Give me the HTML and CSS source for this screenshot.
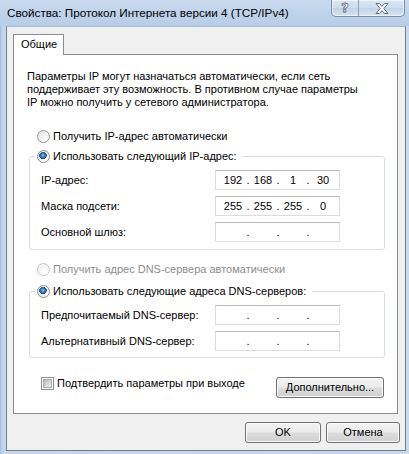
FILE: index.html
```html
<!DOCTYPE html>
<html lang="ru">
<head>
<meta charset="utf-8">
<title>Свойства: Протокол Интернета версии 4 (TCP/IPv4)</title>
<link rel="stylesheet" href="styles.css">
</head>
<body>
<div class="window">
  <div class="titlebar">
    <span class="title">Свойства: Протокол Интернета версии 4 (TCP/IPv4)</span>
    <div class="caption-btns">
      <span class="cbtn help">?</span>
      <span class="cbtn close"><svg width="14" height="11" viewBox="0 0 14 11"><path d="M1 0.5 H4.5 L7 3.4 L9.5 0.5 H13 L8.9 5.5 L13 10.5 H9.5 L7 7.6 L4.5 10.5 H1 L5.1 5.5 Z" fill="#ffffff" stroke="#5d6d80" stroke-width="1" stroke-linejoin="round"/></svg></span>
    </div>
  </div>
  <div class="client">
    <div class="tabs"><span class="tab">Общие</span></div>
    <div class="panel">
      <p class="intro">Параметры IP могут назначаться автоматически, если сеть<br>поддерживает эту возможность. В противном случае параметры<br>IP можно получить у сетевого администратора.</p>

      <div class="opt opt-ip-auto"><span class="radio"></span><span class="opt-text">Получить IP-адрес автоматически</span></div>

      <fieldset class="group group-ip">
        <legend class="opt"><span class="radio checked"></span><span class="opt-text">Использовать следующий IP-адрес:</span></legend>
        <div class="field"><span class="label">IP-адрес:</span>
          <div class="ipbox"><span class="oct">192</span><span class="dot">.</span><span class="oct">168</span><span class="dot">.</span><span class="oct">1</span><span class="dot">.</span><span class="oct">30</span></div>
        </div>
        <div class="field"><span class="label">Маска подсети:</span>
          <div class="ipbox"><span class="oct">255</span><span class="dot">.</span><span class="oct">255</span><span class="dot">.</span><span class="oct">255</span><span class="dot">.</span><span class="oct">0</span></div>
        </div>
        <div class="field"><span class="label">Основной шлюз:</span>
          <div class="ipbox"><span class="oct"></span><span class="dot">.</span><span class="oct"></span><span class="dot">.</span><span class="oct"></span><span class="dot">.</span><span class="oct"></span></div>
        </div>
      </fieldset>

      <div class="opt opt-dns-auto disabled"><span class="radio"></span><span class="opt-text">Получить адрес DNS-сервера автоматически</span></div>

      <fieldset class="group group-dns">
        <legend class="opt"><span class="radio checked"></span><span class="opt-text">Использовать следующие адреса DNS-серверов:</span></legend>
        <div class="field"><span class="label">Предпочитаемый DNS-сервер:</span>
          <div class="ipbox"><span class="oct"></span><span class="dot">.</span><span class="oct"></span><span class="dot">.</span><span class="oct"></span><span class="dot">.</span><span class="oct"></span></div>
        </div>
        <div class="field"><span class="label">Альтернативный DNS-сервер:</span>
          <div class="ipbox"><span class="oct"></span><span class="dot">.</span><span class="oct"></span><span class="dot">.</span><span class="oct"></span><span class="dot">.</span><span class="oct"></span></div>
        </div>
      </fieldset>

      <div class="bottom-row">
        <div class="check-opt"><span class="checkbox"></span><span class="opt-text">Подтвердить параметры при выходе</span></div>
        <button class="btn btn-adv">Дополнительно...</button>
      </div>
    </div>
    <div class="dlg-buttons">
      <button class="btn btn-ok">OK</button>
      <button class="btn btn-cancel">Отмена</button>
    </div>
  </div>
</div>
</body>
</html>
```

FILE: styles.css
```css
* { box-sizing: border-box; }

html, body {
  margin: 0;
  padding: 0;
  background: #c3d6ec;
}

body {
  font-family: "Liberation Sans", Arial, sans-serif;
  font-size: 11px;
  color: #000;
}

.window {
  width: 409px;
  height: 454px;
  background: linear-gradient(90deg, #9fbadb 0px, #bfd3eb 2px, #c6d8ee 6px, #c2d5eb 60%, #c9daee 100%);
  overflow: hidden;
}

.titlebar {
  height: 26px;
  display: flex;
  align-items: flex-start;
  background: linear-gradient(180deg, #c9daee 0%, #bed2ea 55%, #b7cde7 100%);
}

.title {
  font-size: 11.7px;
  line-height: 26px;
  padding-left: 7px;
  color: #000;
  flex: 1;
  white-space: nowrap;
}

.caption-btns {
  display: flex;
  margin-right: 4px;
  height: 17px;
  border: 1px solid #7d8da2;
  border-top: none;
  border-radius: 0 0 5px 5px;
  background: linear-gradient(180deg, rgba(255,255,255,0.35), rgba(255,255,255,0.15) 50%, rgba(190,205,225,0.3) 51%, rgba(255,255,255,0.4));
  box-shadow: inset 0 0 0 1px rgba(255,255,255,0.55);
  overflow: hidden;
}

.cbtn {
  display: flex;
  align-items: center;
  justify-content: center;
  height: 16px;
}

.help {
  width: 27px;
  border-right: 1px solid #8b9bb0;
  font-family: "DejaVu Sans", sans-serif;
  font-weight: bold;
  font-size: 13px;
  color: #fff;
  -webkit-text-stroke: 0.8px #5d6d80;
  line-height: 16px;
}

.close {
  width: 45px;
}

.client {
  margin-left: 6px;
  width: 400px;
  height: 425px;
  background: #f0f0f0;
  border: 1px solid #6e7f94;
  border-top-color: #a9bbd1;
  padding: 7px 0 0 6px;
}

.tabs {
  display: flex;
  height: 20px;
  position: relative;
  z-index: 1;
}

.tab {
  width: 51px;
  height: 21px;
  border: 1px solid #898c95;
  border-bottom: none;
  background: #fff;
  padding-left: 7px;
  line-height: 18px;
}

.panel {
  width: 385px;
  height: 360px;
  background: #fff;
  border: 1px solid #898c95;
  padding: 14px 12px 0 13px;
}

.intro {
  margin: 0;
  line-height: 13px;
  padding-top: 1px;
}

.opt {
  display: flex;
  align-items: center;
  height: 16px;
  line-height: 16px;
  white-space: nowrap;
}

.opt-text { margin-left: 3px; }

.opt-ip-auto {
  margin-top: 19px;
  margin-left: 10px;
}

.opt-dns-auto {
  margin-top: 11px;
  margin-left: 10px;
}

.disabled { color: #8d8d8d; }

.radio {
  width: 13px;
  height: 13px;
  border-radius: 50%;
  border: 1px solid #8e8f8f;
  background: radial-gradient(circle at 65% 70%, #ffffff 0%, #f3f3f3 35%, #d4d4d4 100%);
  box-shadow: inset 0 0 0 1px rgba(255,255,255,0.6);
  position: relative;
  flex: none;
}

.radio.checked {
  background:
    radial-gradient(circle at 45% 40%, #8fd0f5 0px, #3d8fd6 1.5px, #1c5a9c 3px, #0f3f76 3.6px, transparent 3.8px),
    radial-gradient(circle at 65% 70%, #ffffff 0%, #f3f3f3 35%, #d4d4d4 100%);
}

.disabled .radio {
  border-color: #c4c4c4;
  background: radial-gradient(circle at 65% 70%, #ffffff 0%, #f6f6f6 45%, #e6e6e6 100%);
}

.group {
  margin: 4px 0 0 2px;
  width: 356px;
  min-width: 0;
  border: 1px solid #d5dfe5;
  border-radius: 3px;
  padding: 6px 0 7px 5px;
}

.group-dns {
  margin-top: 6px;
  padding-bottom: 6px;
}

.group legend {
  padding: 0 6px 0 2px;
}

.field {
  display: grid;
  grid-template-columns: 174px 125px;
  align-items: center;
  height: 20px;
  margin-left: 6px;
}

.field + .field { margin-top: 6px; }

.label { white-space: nowrap; }

.ipbox {
  height: 20px;
  border: 1px solid #dcdcdc;
  border-top-color: #b9b9b9;
  background: #fff;
  display: flex;
  align-items: center;
  padding-left: 6px;
  line-height: 18px;
}

.oct {
  width: 22px;
  text-align: center;
}

.dot {
  width: 8px;
  text-align: center;
}

.bottom-row {
  display: flex;
  justify-content: space-between;
  align-items: flex-start;
  margin-top: 17px;
}

.check-opt {
  display: flex;
  align-items: center;
  height: 16px;
  line-height: 16px;
  margin-left: 14px;
  white-space: nowrap;
}

.checkbox {
  width: 13px;
  height: 13px;
  border: 1px solid #8e8f8f;
  background: #fff;
  position: relative;
  flex: none;
}

.checkbox::after {
  content: "";
  position: absolute;
  left: 1px;
  top: 1px;
  width: 9px;
  height: 9px;
  background: linear-gradient(135deg, #b5b8bc 0%, #d6d8da 55%, #eeeeee 100%);
  border: 1px solid #a6a9ad;
  box-sizing: border-box;
}

.btn {
  font-family: "Liberation Sans", Arial, sans-serif;
  font-size: 11px;
  color: #000;
  height: 21px;
  padding: 0;
  border: 1px solid #707070;
  border-radius: 3px;
  background: linear-gradient(180deg, #f2f2f2 0%, #ebebeb 48%, #dddddd 52%, #cfcfcf 100%);
  box-shadow: inset 0 0 0 1px #fbfbfb;
  line-height: 19px;
}

.btn-adv {
  width: 108px;
  margin-top: 2px;
  margin-right: 1px;
}

.dlg-buttons {
  display: flex;
  justify-content: flex-end;
  gap: 5px;
  margin-top: 8px;
  padding-right: 5px;
}

.btn-ok { width: 76px; }
.btn-cancel { width: 74px; }
```
